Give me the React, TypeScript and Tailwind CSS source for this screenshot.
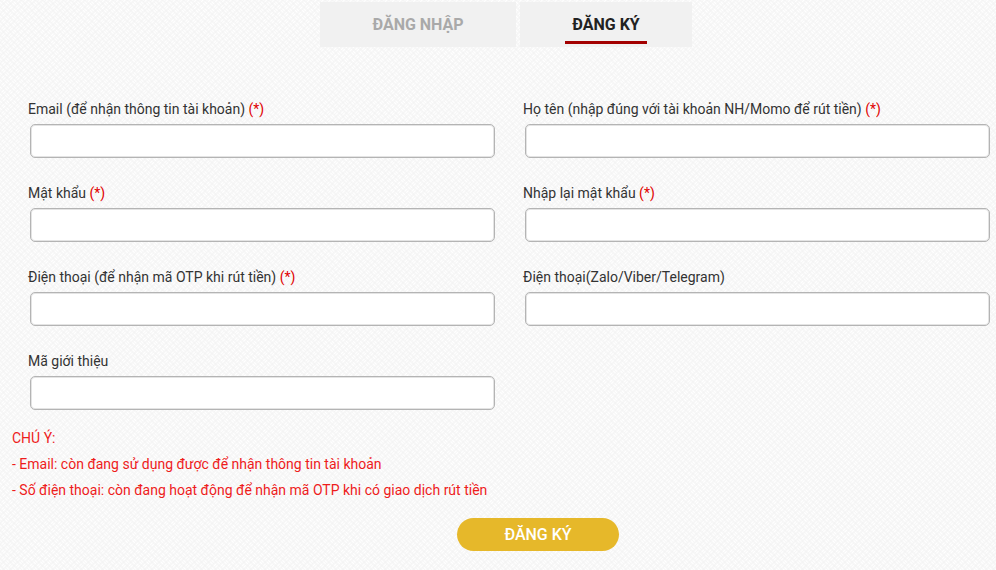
import React from "react"

type Field = { label: string; required?: boolean }

const rows: [Field, Field | null][] = [
  [
    { label: "Email (để nhận thông tin tài khoản)", required: true },
    { label: "Họ tên (nhập đúng với tài khoản NH/Momo để rút tiền)", required: true },
  ],
  [
    { label: "Mật khẩu", required: true },
    { label: "Nhập lại mật khẩu", required: true },
  ],
  [
    { label: "Điện thoại (để nhận mã OTP khi rút tiền)", required: true },
    { label: "Điện thoại(Zalo/Viber/Telegram)" },
  ],
  [{ label: "Mã giới thiệu" }, null],
]

function WeaveBackground() {
  return (
    <svg className="absolute inset-0 -z-10 h-full w-full" aria-hidden="true">
      <defs>
        <pattern id="weave" width="10" height="10" patternUnits="userSpaceOnUse" patternTransform="rotate(45)">
          <rect width="10" height="10" fill="#f2f2f2" />
          <rect x="0.5" y="0.6" width="4" height="1.6" fill="#ffffff" />
          <rect x="0.5" y="2.8" width="4" height="1.6" fill="#ffffff" />
          <rect x="5.5" y="5.6" width="4" height="1.6" fill="#ffffff" />
          <rect x="5.5" y="7.8" width="4" height="1.6" fill="#ffffff" />
          <rect x="5.6" y="0.5" width="1.6" height="4" fill="#ffffff" />
          <rect x="7.8" y="0.5" width="1.6" height="4" fill="#ffffff" />
          <rect x="0.6" y="5.5" width="1.6" height="4" fill="#ffffff" />
          <rect x="2.8" y="5.5" width="1.6" height="4" fill="#ffffff" />
        </pattern>
      </defs>
      <rect width="100%" height="100%" fill="url(#weave)" />
    </svg>
  )
}

function FormField({ field }: { field: Field }) {
  return (
    <div className="flex flex-col">
      <label className="h-[16px] text-[14px] leading-[16px] text-[#333]">
        {field.label}
        {field.required && <span className="text-[#e00000]"> (*)</span>}
      </label>
      <input
        type="text"
        className="ml-[2px] mt-[7px] h-[34px] w-[465px] rounded-[5px] border border-[#b4b4b4] bg-white shadow-[inset_0_0_0_1px_#e4e4e4] outline-none"
      />
    </div>
  )
}

export default function App() {
  return (
    <div
      className="relative isolate h-[570px] w-[996px] overflow-hidden"
      style={{ fontFamily: "Roboto, 'Liberation Sans', Arial, sans-serif" }}
    >
      <WeaveBackground />

      <div className="flex justify-center gap-[4px] pl-[16px] pt-[2px]">
        <button className="flex h-[45px] w-[196px] items-center justify-center bg-[#f1f1f1] text-[16px] font-bold text-[#a9a9a9]">
          ĐĂNG NHẬP
        </button>
        <button className="relative flex h-[45px] w-[172px] items-center justify-center bg-[#f1f1f1] text-[16px] font-bold text-[#222]">
          ĐĂNG KÝ
          <span className="absolute bottom-[3px] left-[45px] h-[3px] w-[82px] bg-[#a30000]" />
        </button>
      </div>

      <div className="mt-[54px] flex flex-col gap-[27px] pl-[28px]">
        {rows.map(([left, right], i) => (
          <div key={i} className="grid grid-cols-[467px_467px] gap-x-[28px]">
            <FormField field={left} />
            {right ? <FormField field={right} /> : <div />}
          </div>
        ))}
      </div>

      <div className="mt-[15px] pl-[12px] text-[14px] leading-[26px] text-[#ee1c1c]">
        <div>CHÚ Ý:</div>
        <div>- Email: còn đang sử dụng được để nhận thông tin tài khoản</div>
        <div>- Số điện thoại: còn đang hoạt động để nhận mã OTP khi có giao dịch rút tiền</div>
      </div>

      <div className="mt-[15px] flex justify-center pl-[80px]">
        <button className="h-[33px] w-[162px] rounded-full bg-[#e6b82a] text-[16px] font-medium text-white">
          ĐĂNG KÝ
        </button>
      </div>
    </div>
  )
}
